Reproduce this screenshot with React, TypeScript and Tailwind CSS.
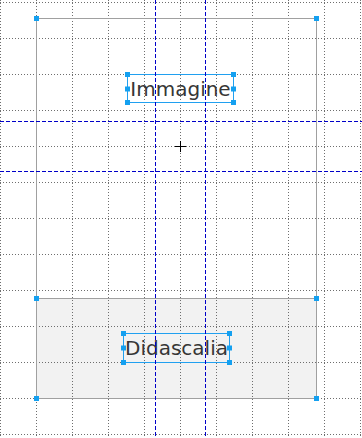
import React from "react";

const Handle = ({ pos }: { pos: string }) => (
  <span className={"absolute w-[5px] h-[5px] bg-[#14a0f0] " + pos} />
);

const Label = ({ text, cls }: { text: string; cls: string }) => (
  <div
    className={
      "relative flex items-center justify-center border border-[#20a0f0] text-[20px] leading-none text-[#363636] " +
      cls
    }
  >
    {text}
    <Handle pos="-left-[3px] -top-[3px]" />
    <Handle pos="-right-[3px] -top-[3px]" />
    <Handle pos="-left-[3px] top-1/2 -translate-y-1/2" />
    <Handle pos="-right-[3px] top-1/2 -translate-y-1/2" />
    <Handle pos="-left-[3px] -bottom-[3px]" />
    <Handle pos="-right-[3px] -bottom-[3px]" />
  </div>
);

export default function App() {
  const vx = Array.from({ length: 11 }, (_, i) => i * 36);
  const hy = Array.from({ length: 13 }, (_, i) => 2 + i * 36);
  return (
    <div className="relative w-[362px] h-[438px] bg-white overflow-hidden font-['DejaVu_Sans',sans-serif]">
      {/* canvas grid (with caption area shading) */}
      <svg className="absolute inset-0" width={362} height={438}>
        <rect x={36} y={298} width={281} height={101} fill="#f2f2f2" />
        {vx.map((x) => (
          <line key={"v" + x} x1={x + 0.5} y1={0} x2={x + 0.5} y2={438} stroke="#6e6e6e" strokeDasharray="1 2" />
        ))}
        {hy.map((y) => (
          <line key={"h" + y} x1={0} y1={y + 0.5} x2={362} y2={y + 0.5} stroke="#6e6e6e" strokeDasharray="1 2" />
        ))}
      </svg>

      {/* page content: padded canvas with the frame */}
      <div className="relative pl-[36px] pt-[18px]">
        <div className="relative w-[281px] h-[381px] border border-[#a0a0a0] flex flex-col">
          <div className="flex-1 flex justify-center pt-[55px] pl-[8px]">
            <Label text="Immagine" cls="w-[107px] h-[29px]" />
          </div>
          <div className="h-[100px] border-t border-[#a0a0a0] flex justify-center pt-[34px]">
            <Label text="Didascalia" cls="w-[107px] h-[30px]" />
          </div>
          <Handle pos="-left-[3px] -top-[3px]" />
          <Handle pos="-right-[3px] -top-[3px]" />
          <Handle pos="-left-[3px] bottom-[97px]" />
          <Handle pos="-right-[3px] bottom-[97px]" />
          <Handle pos="-left-[3px] -bottom-[3px]" />
          <Handle pos="-right-[3px] -bottom-[3px]" />
        </div>
      </div>

      {/* guides and crosshair */}
      <svg className="absolute inset-0 pointer-events-none" width={362} height={438}>
        <line x1={155.5} y1={0} x2={155.5} y2={438} stroke="#0000c8" strokeDasharray="4 2" />
        <line x1={205.5} y1={0} x2={205.5} y2={438} stroke="#0000c8" strokeDasharray="4 2" />
        <line x1={0} y1={121.5} x2={362} y2={121.5} stroke="#0000c8" strokeDasharray="4 2" />
        <line x1={0} y1={171.5} x2={362} y2={171.5} stroke="#0000c8" strokeDasharray="4 2" />
        <line x1={175} y1={146.5} x2={186} y2={146.5} stroke="#000" />
        <line x1={180.5} y1={141} x2={180.5} y2={152} stroke="#000" />
      </svg>
    </div>
  );
}
